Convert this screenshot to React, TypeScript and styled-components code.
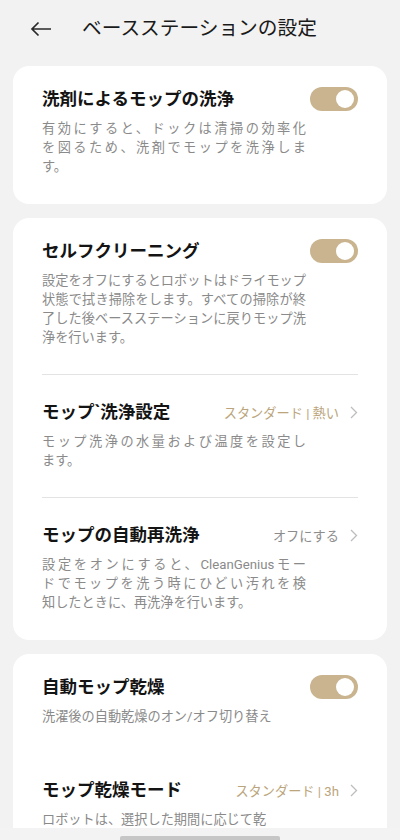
import React from 'react'
import styled, { createGlobalStyle } from 'styled-components'

const GlobalStyle = createGlobalStyle`
  html, body {
    margin: 0;
    padding: 0;
    background: #f2f2f2;
    font-family: Roboto, "Noto Sans CJK JP", "Noto Sans", sans-serif;
  }
`

const Page = styled.div`
  width: 400px;
  min-height: 840px;
  background: #f2f2f2;
  display: flex;
  flex-direction: column;
  padding-bottom: 40px;
`

const Header = styled.header`
  height: 66px;
  display: flex;
  align-items: center;
  padding: 0 0 8px 29px;
  box-sizing: border-box;
`

const BackButton = styled.button`
  width: 24px;
  height: 24px;
  padding: 0;
  border: none;
  background: none;
  display: flex;
  align-items: center;
  justify-content: center;
  color: #2a2a2a;
`

const Title = styled.h1`
  margin: 0 0 0 29px;
  font-size: 19.7px;
  font-weight: 400;
  color: #1a1a1a;
  line-height: 28px;
`

const CardList = styled.div`
  display: flex;
  flex-direction: column;
  gap: 14px;
  padding: 0 13px;
`

const Card = styled.section`
  background: #ffffff;
  border-radius: 16px;
  padding: 0 29px;
`

const Row = styled.div<{ $divider?: boolean }>`
  padding: 25px 0 27px;
  border-bottom: ${({ $divider }) => ($divider ? '1px solid #e3e3e3' : 'none')};

  &:first-child {
    padding-top: 21px;
  }

  &:last-child {
    padding-bottom: 28px;
  }
`

const RowHead = styled.div`
  display: flex;
  align-items: center;
  justify-content: space-between;
  height: 24px;
`

const RowTitle = styled.div`
  font-size: 17.5px;
  font-weight: 700;
  color: #141414;
  line-height: 24px;
  white-space: nowrap;
`

const Desc = styled.div`
  margin-top: 8px;
  width: 264px;
  font-size: 13.2px;
  line-height: 19px;
  color: #8a8a8a;
`

const Line = styled.span<{ $justify?: boolean }>`
  display: block;
  white-space: nowrap;
  text-align: left;
  text-align-last: ${({ $justify }) => ($justify ? 'justify' : 'left')};
`

const Toggle = styled.div<{ $on?: boolean }>`
  width: 48px;
  height: 24px;
  border-radius: 12px;
  background: ${({ $on }) => ($on ? '#c9b48f' : '#d9d9d9')};
  display: flex;
  align-items: center;
  justify-content: ${({ $on }) => ($on ? 'flex-end' : 'flex-start')};
  padding: 0 4px;
  box-sizing: border-box;
  flex-shrink: 0;
`

const Knob = styled.span`
  width: 18px;
  height: 18px;
  border-radius: 50%;
  background: #ffffff;
`

const ValueLink = styled.div`
  display: flex;
  align-items: center;
  gap: 11px;
`

const Value = styled.span<{ $accent?: boolean }>`
  font-size: 13.2px;
  color: ${({ $accent }) => ($accent ? '#bba57c' : '#8c8c8c')};
  white-space: nowrap;
`

const Chevron = styled.svg`
  width: 8px;
  height: 13px;
  color: #bdbdbd;
  flex-shrink: 0;
`

const NavBar = styled.div`
  position: fixed;
  left: 0;
  right: 0;
  bottom: 0;
  height: 12px;
  background: #f3f3f3;
  display: flex;
  justify-content: center;
  align-items: flex-end;
`

const Handle = styled.span`
  width: 160px;
  height: 4px;
  border-radius: 2px 2px 0 0;
  background: #c6c6c6;
`

type Item = {
  title: string
  lines: string[]
  toggle?: boolean
  value?: string
  accent?: boolean
}

const cards: Item[][] = [
  [
    {
      title: '洗剤によるモップの洗浄',
      toggle: true,
      lines: ['有効にすると、ドックは清掃の効率化', 'を図るため、洗剤でモップを洗浄しま', 'す。'],
    },
  ],
  [
    {
      title: 'セルフクリーニング',
      toggle: true,
      lines: [
        '設定をオフにするとロボットはドライモップ',
        '状態で拭き掃除をします。すべての掃除が終',
        '了した後ベースステーションに戻りモップ洗',
        '浄を行います。',
      ],
    },
    {
      title: 'モップ`洗浄設定',
      value: 'スタンダード | 熱い',
      accent: true,
      lines: ['モップ洗浄の水量および温度を設定し', 'ます。'],
    },
    {
      title: 'モップの自動再洗浄',
      value: 'オフにする',
      lines: [
        '設定をオンにすると、CleanGeniusモー',
        'ドでモップを洗う時にひどい汚れを検',
        '知したときに、再洗浄を行います。',
      ],
    },
  ],
  [
    {
      title: '自動モップ乾燥',
      toggle: true,
      lines: ['洗濯後の自動乾燥のオン/オフ切り替え'],
    },
    {
      title: 'モップ乾燥モード',
      value: 'スタンダード | 3h',
      accent: true,
      lines: ['ロボットは、選択した期間に応じて乾'],
    },
  ],
]

function SettingRow({ item, divider }: { item: Item; divider: boolean }) {
  return (
    <Row $divider={divider}>
      <RowHead>
        <RowTitle>{item.title}</RowTitle>
        {item.toggle ? (
          <Toggle $on>
            <Knob />
          </Toggle>
        ) : (
          <ValueLink>
            <Value $accent={item.accent}>{item.value}</Value>
            <Chevron viewBox="0 0 8 13" fill="none">
              <path d="M1 1l5.5 5.5L1 12" stroke="currentColor" strokeWidth="1.3" />
            </Chevron>
          </ValueLink>
        )}
      </RowHead>
      <Desc>
        {item.lines.map((line, i) => (
          <Line key={i} $justify={i < item.lines.length - 1}>
            {line}
          </Line>
        ))}
      </Desc>
    </Row>
  )
}

export default function App() {
  return (
    <Page>
      <GlobalStyle />
      <Header>
        <BackButton aria-label="back">
          <svg width="22" height="16" viewBox="0 0 22 16" fill="none">
            <path d="M21 8H2M8.5 1.5L2 8l6.5 6.5" stroke="currentColor" strokeWidth="1.7" />
          </svg>
        </BackButton>
        <Title>ベースステーションの設定</Title>
      </Header>
      <CardList>
        {cards.map((items, ci) => (
          <Card key={ci}>
            {items.map((item, i) => (
              <SettingRow key={i} item={item} divider={ci === 1 && i < items.length - 1} />
            ))}
          </Card>
        ))}
      </CardList>
      <NavBar>
        <Handle />
      </NavBar>
    </Page>
  )
}
